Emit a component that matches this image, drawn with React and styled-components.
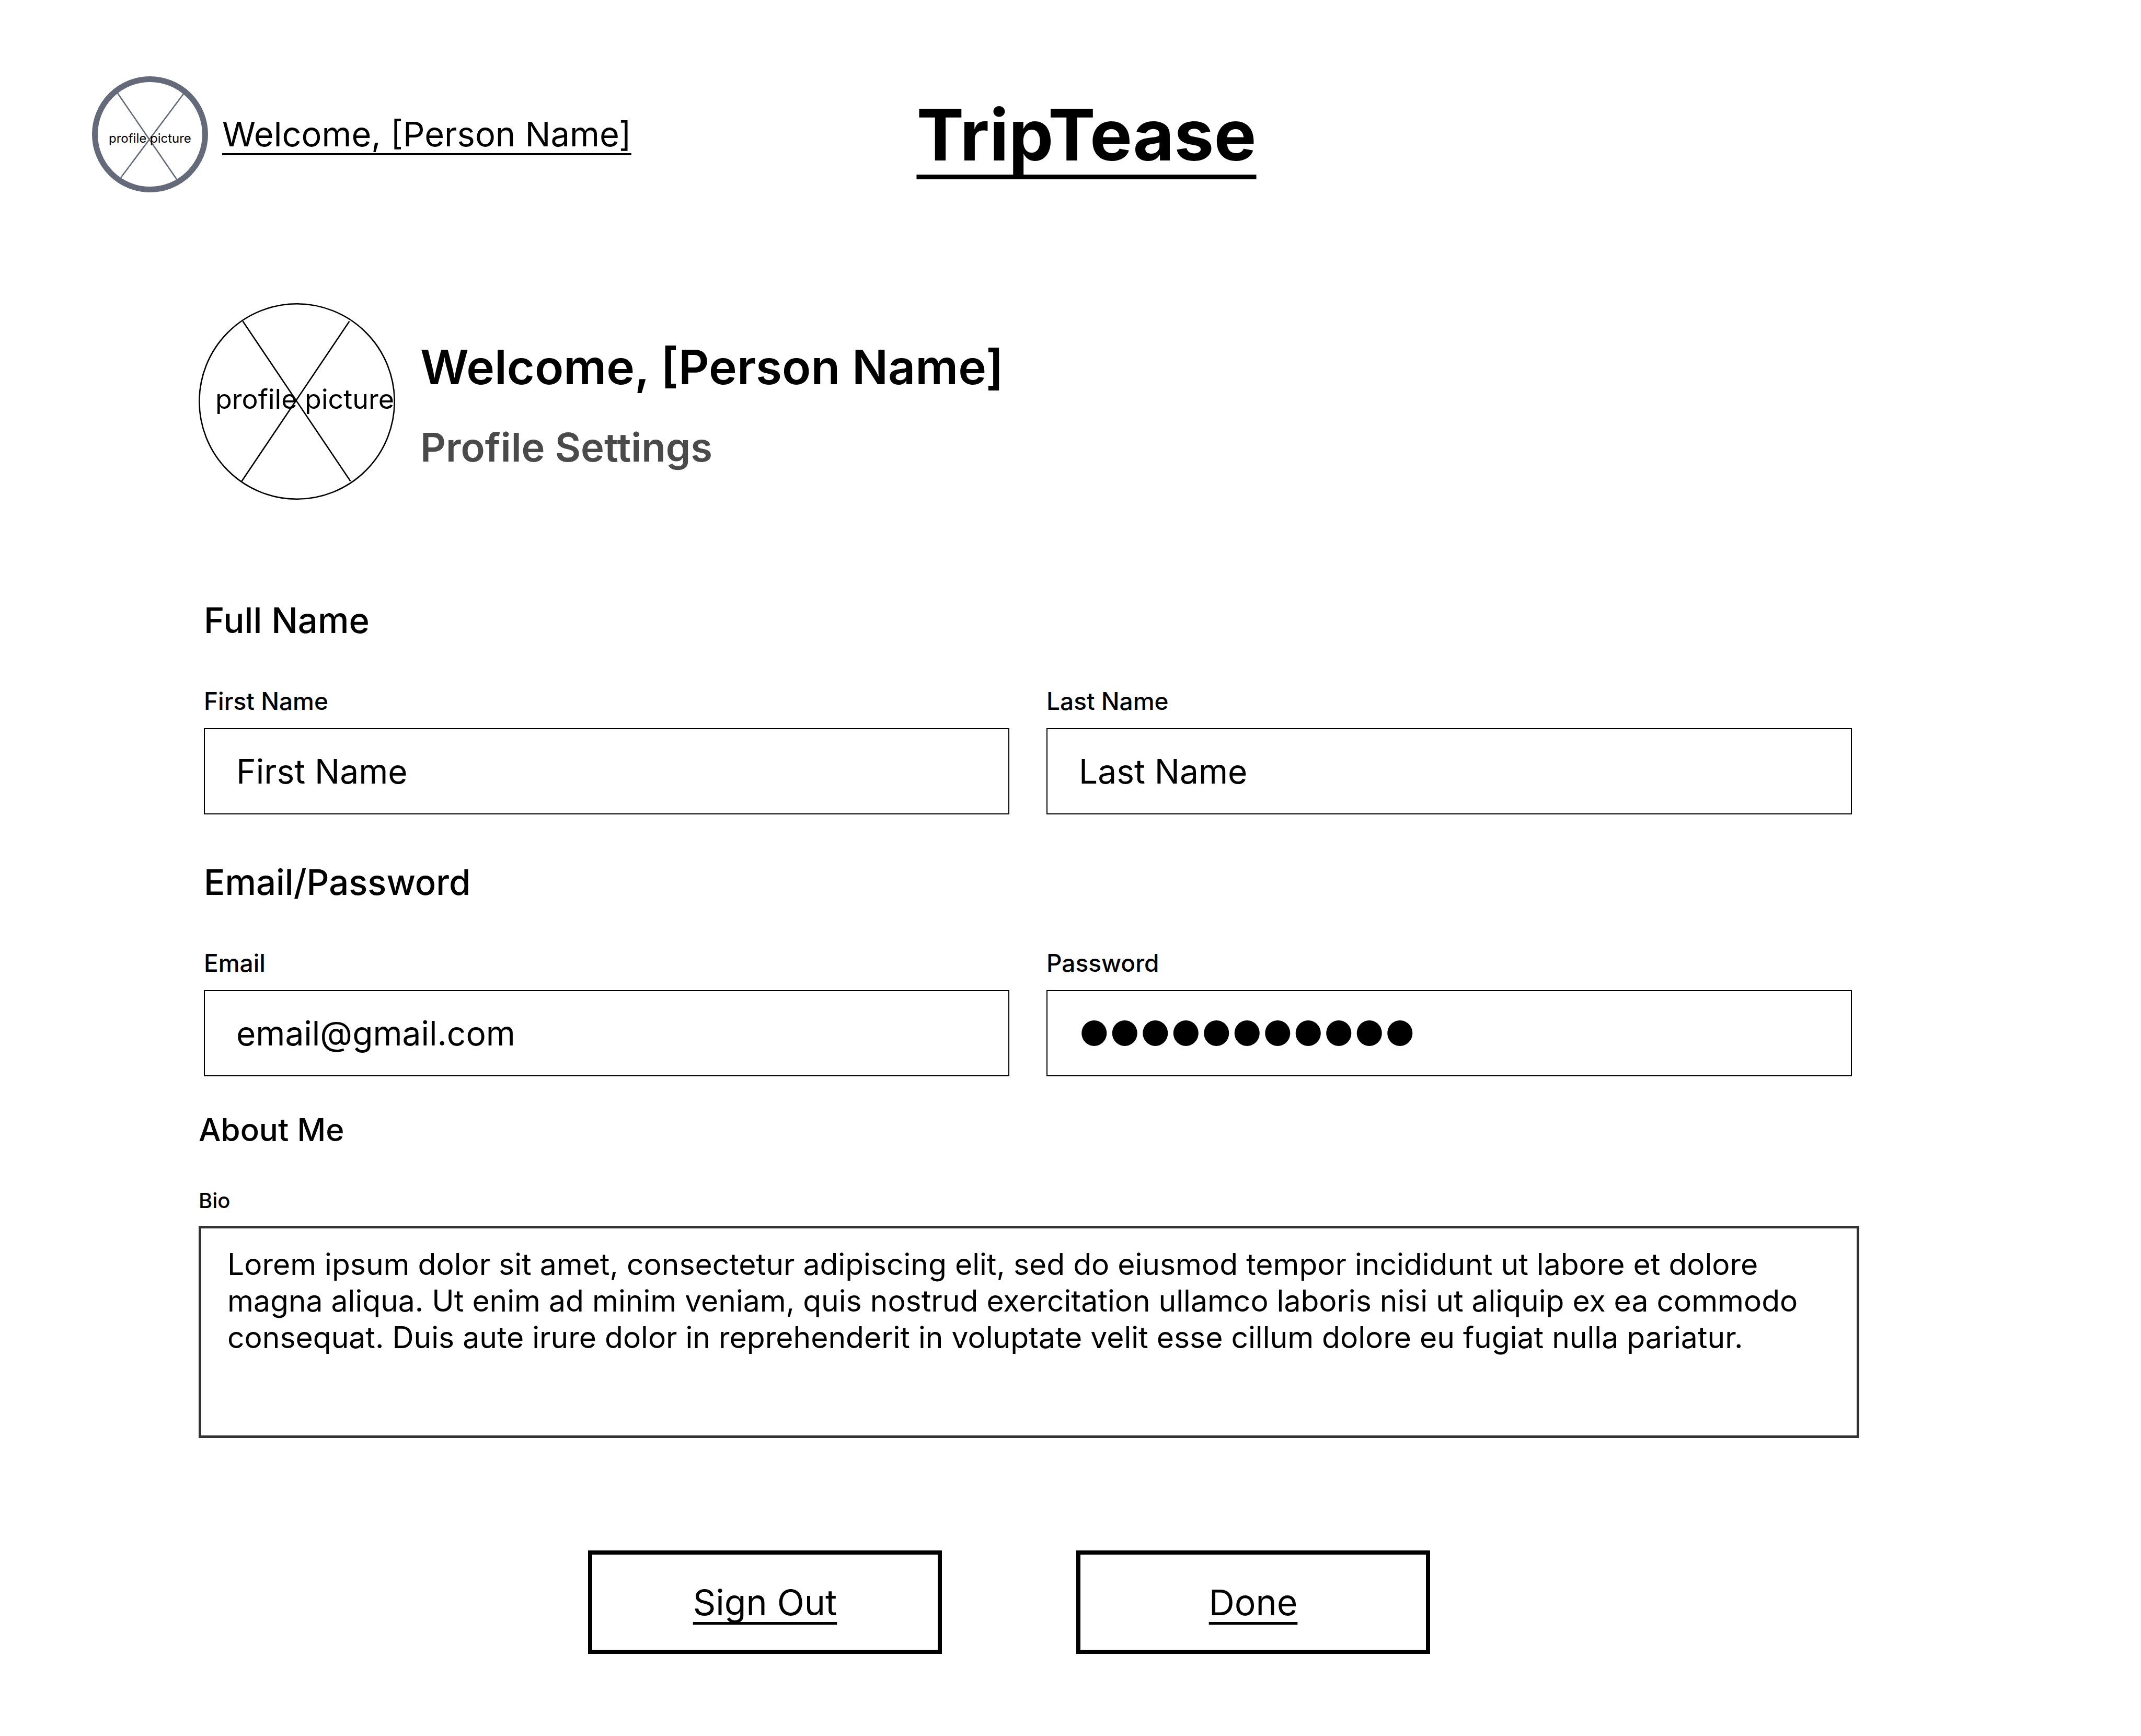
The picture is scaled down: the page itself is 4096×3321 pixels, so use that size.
import React from "react";
import styled, { createGlobalStyle } from "styled-components";

const GlobalStyle = createGlobalStyle`
  *, *::before, *::after { box-sizing: border-box; }
  body {
    margin: 0;
    background: #ffffff;
    color: #000000;
    font-family: Inter, "Liberation Sans", sans-serif;
  }
  h1, h2, h3, p { margin: 0; }
  button, input, textarea { font-family: inherit; color: inherit; }
`;

const Page = styled.div`
  padding: 146px 0 157px;
`;

const Header = styled.header`
  display: grid;
  grid-template-columns: 1fr auto 1fr;
  align-items: center;
  padding: 0 115px 0 176px;
`;

const Account = styled.div`
  display: flex;
  align-items: center;
  gap: 27px;
`;

const AccountLink = styled.a`
  color: inherit;
  font-size: 65px;
  line-height: 80px;
  text-decoration: underline;
  text-decoration-thickness: 4px;
  text-decoration-skip-ink: none;
  text-underline-offset: 13px;
`;

const Brand = styled.h1`
  padding-top: 2px;
  font-size: 136px;
  font-weight: 700;
  line-height: 164px;
  text-decoration: underline;
  text-decoration-thickness: 9px;
  text-decoration-skip-ink: none;
  text-underline-offset: 27px;
`;

const AvatarFrame = styled.div`
  position: relative;
  flex: none;
  width: ${(p) => p.$size}px;
  height: ${(p) => p.$size}px;

  svg {
    display: block;
    width: 100%;
    height: 100%;
  }
`;

const AvatarCaption = styled.span`
  position: absolute;
  top: ${(p) => p.$top}px;
  left: 32px;
  font-size: ${(p) => p.$font}px;
  line-height: 60px;
  white-space: nowrap;
`;

const Main = styled.main`
  padding: 212px 539px 0 380px;
`;

const Hero = styled.section`
  display: flex;
  gap: 48px;
`;

const HeroText = styled.div`
  display: flex;
  flex-direction: column;
  gap: 54px;
  padding-top: 68px;
`;

const HeroTitle = styled.h2`
  font-size: 91px;
  font-weight: 600;
  line-height: 108px;
`;

const HeroSubtitle = styled.p`
  color: #4a4a4a;
  font-size: 76px;
  font-weight: 600;
  line-height: 90px;
`;

const Form = styled.form`
  padding-top: 191px;
`;

const FieldGroup = styled.section`
  padding: 0 14px 0 10px;

  & + & { padding-top: 90px; }
`;

const GroupTitle = styled.h3`
  margin-bottom: 86px;
  font-size: 67px;
  font-weight: 500;
  line-height: 80px;
`;

const Fields = styled.div`
  display: grid;
  grid-template-columns: 1fr 1fr;
  gap: 71px;
`;

const Field = styled.div`
  display: flex;
  flex-direction: column;
  gap: 24px;
`;

const Label = styled.label`
  font-size: 46px;
  font-weight: 500;
  line-height: 56px;
`;

const TextInput = styled.input`
  width: 100%;
  height: 165px;
  padding: 0 60px;
  border: 2px solid #000000;
  border-radius: 0;
  background: transparent;
  font-size: 64px;
  outline: none;
`;

const About = styled.section`
  padding-top: 66px;
`;

const AboutTitle = styled.h3`
  margin-bottom: 72px;
  font-size: 60px;
  font-weight: 500;
  line-height: 72px;
`;

const BioLabel = styled(Label)`
  display: block;
  margin-bottom: 20px;
  font-size: 40px;
`;

const Bio = styled.textarea`
  display: block;
  width: 100%;
  height: 406px;
  padding: 34px 50px;
  border: 5px solid #333333;
  border-radius: 0;
  background: transparent;
  font-size: 57px;
  line-height: 70px;
  outline: none;
  resize: none;
  overflow: hidden;
`;

const Actions = styled.div`
  display: flex;
  justify-content: center;
  gap: 257px;
  padding: 215px 76px 0 0;
`;

const ActionButton = styled.button`
  width: 677px;
  height: 198px;
  padding: 0;
  border: 8px solid #000000;
  background: transparent;
  font-size: 68px;
  line-height: 82px;
  text-decoration: underline;
  text-decoration-thickness: 5px;
  text-decoration-skip-ink: none;
  text-underline-offset: 13px;
`;

function HeaderAvatar() {
  return (
    <AvatarFrame $size={222}>
      <svg viewBox="0 0 222 222" fill="none" stroke="#656a7b" aria-hidden="true">
        <circle cx="111" cy="111" r="105.5" strokeWidth="11" />
        <path d="M48.5 31.5 162 197M175.5 33 55 194" strokeWidth="2.6" />
      </svg>
      <AvatarCaption $top={89} $font={24}>profile picture</AvatarCaption>
    </AvatarFrame>
  );
}

function ProfileAvatar() {
  return (
    <AvatarFrame $size={376}>
      <svg viewBox="0 0 376 376" fill="none" stroke="#000000" strokeWidth="2.6" aria-hidden="true">
        <circle cx="188" cy="188" r="186.7" />
        <path d="M84.5 34.5 290.5 340.5M288.5 34.5 82.5 340.5" />
      </svg>
      <AvatarCaption $top={154} $font={52}>profile picture</AvatarCaption>
    </AvatarFrame>
  );
}

function LabeledInput({ id, label, type = "text", value, autoComplete }) {
  return (
    <Field>
      <Label htmlFor={id}>{label}</Label>
      <TextInput id={id} type={type} defaultValue={value} autoComplete={autoComplete} />
    </Field>
  );
}

const BIO =
  "Lorem ipsum dolor sit amet, consectetur adipiscing elit, sed do eiusmod tempor incididunt ut labore et dolore magna aliqua. Ut enim ad minim veniam, quis nostrud exercitation ullamco laboris nisi ut aliquip ex ea commodo consequat. Duis aute irure dolor in reprehenderit in voluptate velit esse cillum dolore eu fugiat nulla pariatur.";

export default function App() {
  return (
    <>
      <GlobalStyle />
      <Page>
        <Header>
          <Account>
            <HeaderAvatar />
            <AccountLink href="#profile">Welcome, [Person Name]</AccountLink>
          </Account>
          <Brand>TripTease</Brand>
        </Header>
        <Main id="profile">
          <Hero>
            <ProfileAvatar />
            <HeroText>
              <HeroTitle>Welcome, [Person Name]</HeroTitle>
              <HeroSubtitle>Profile Settings</HeroSubtitle>
            </HeroText>
          </Hero>
          <Form onSubmit={(e) => e.preventDefault()}>
            <FieldGroup>
              <GroupTitle>Full Name</GroupTitle>
              <Fields>
                <LabeledInput id="first-name" label="First Name" value="First Name" />
                <LabeledInput id="last-name" label="Last Name" value="Last Name" />
              </Fields>
            </FieldGroup>
            <FieldGroup>
              <GroupTitle>Email/Password</GroupTitle>
              <Fields>
                <LabeledInput id="email" label="Email" type="email" value="email@gmail.com" />
                <LabeledInput id="password" label="Password" value="●●●●●●●●●●●" autoComplete="off" />
              </Fields>
            </FieldGroup>
            <About>
              <AboutTitle>About Me</AboutTitle>
              <BioLabel htmlFor="bio">Bio</BioLabel>
              <Bio id="bio" defaultValue={BIO} spellCheck={false} />
            </About>
            <Actions>
              <ActionButton type="button">Sign Out</ActionButton>
              <ActionButton type="submit">Done</ActionButton>
            </Actions>
          </Form>
        </Main>
      </Page>
    </>
  );
}
